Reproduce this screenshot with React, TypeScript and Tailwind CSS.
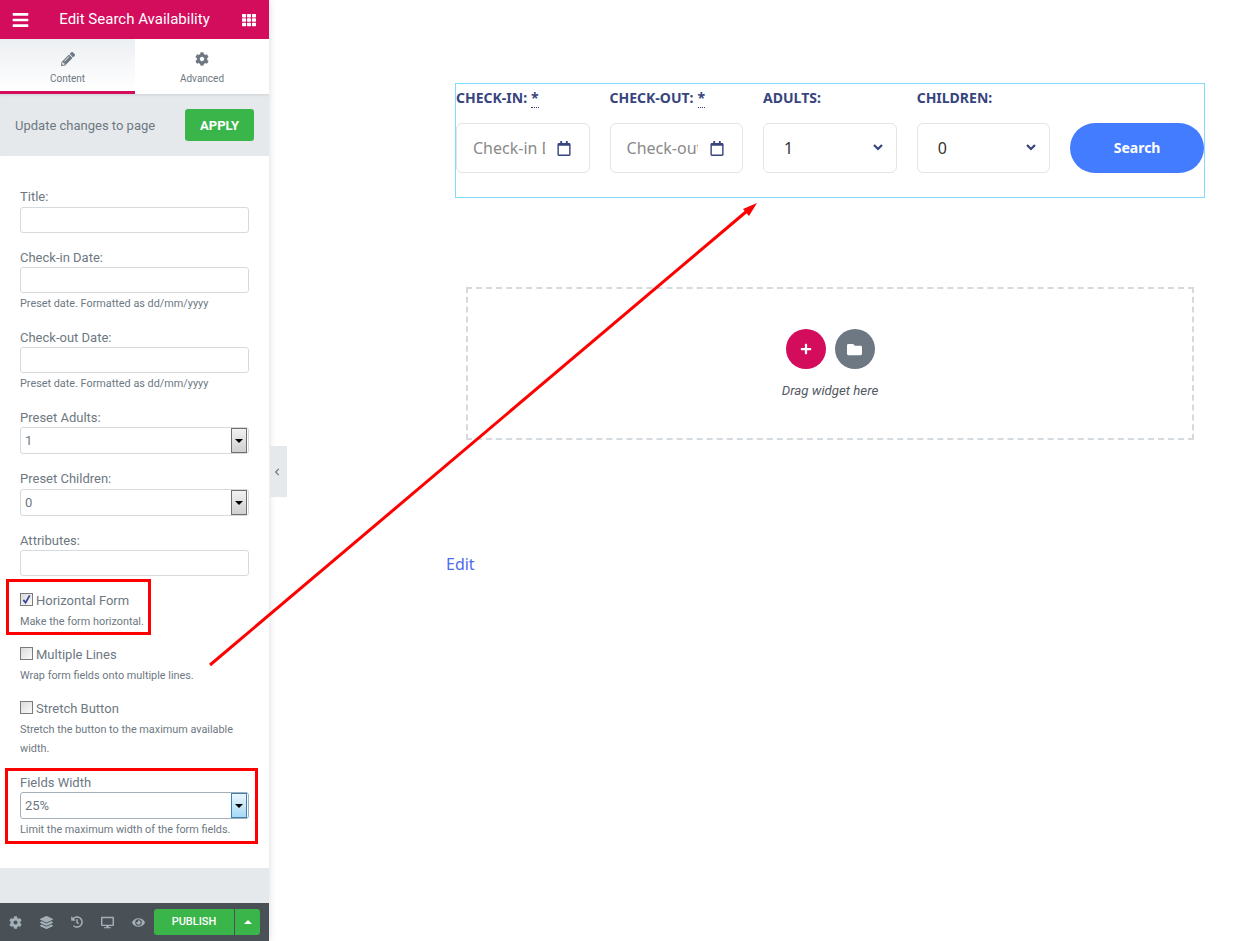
import type { ReactNode } from "react";
import {
  FaBars,
  FaChevronLeft,
  FaCog,
  FaDesktop,
  FaEye,
  FaFolder,
  FaHistory,
  FaLayerGroup,
  FaPencilAlt,
  FaPlus,
  FaRegCalendar,
  FaTh,
} from "react-icons/fa";

const Label = ({ children, className = "" }: { children: ReactNode; className?: string }) => (
  <div className={`h-[15px] text-[13px] leading-[15px] text-[#6d7882] ${className}`}>{children}</div>
);

const Help = ({ children, className = "" }: { children: ReactNode; className?: string }) => (
  <p className={`text-[10.85px] leading-[19px] text-[#6d7882] ${className}`}>{children}</p>
);

const TextBox = ({ className = "" }: { className?: string }) => (
  <input
    type="text"
    className={`block h-[26px] w-[229px] rounded-[3px] border border-[#d5dadf] bg-white outline-none ${className}`}
  />
);

const SelectBox = ({ value, active = false, className = "" }: { value: string; active?: boolean; className?: string }) => (
  <div
    className={`flex h-[27px] w-[229px] items-center justify-between rounded-[3px] border pl-[4px] pr-[1px] text-[13px] text-[#6d7882] ${
      active ? "border-[#a4afb7]" : "border-[#d5dadf]"
    } ${className}`}
  >
    <span>{value}</span>
    <span
      className={`flex h-[25px] w-[16px] items-center justify-center border ${
        active
          ? "border-[#3c7fb1] bg-gradient-to-b from-[#eaf6fd] to-[#a7d9f5]"
          : "border-[#707070] bg-gradient-to-b from-[#f2f2f2] to-[#cfcfcf]"
      }`}
    >
      <span className="h-0 w-0 border-x-[4px] border-t-[4px] border-x-transparent border-t-black" />
    </span>
  </div>
);

const CheckRow = ({ label, checked = false }: { label: string; checked?: boolean }) => (
  <div className="flex h-[15px] items-center gap-[3px]">
    <span className="mb-[2px] flex h-[13px] w-[13px] items-center justify-center border border-[#7b7b7b] bg-gradient-to-br from-[#dcdcdc] to-[#fafafa]">
      {checked && (
        <svg viewBox="0 0 12 12" className="h-[11px] w-[11px]">
          <path d="M2.5 6.5 L5 9.5 L9.5 1.5" fill="none" stroke="#3b4a9c" strokeWidth="2" />
        </svg>
      )}
    </span>
    <span className="text-[13px] leading-[15px] text-[#6d7882]">{label}</span>
  </div>
);

const FormField = ({ label, required = false, children }: { label: string; required?: boolean; children: ReactNode }) => (
  <div className="w-[134px]">
    <div className="h-[24px] text-[14px] font-bold leading-[28px] text-[#37447e]">
      {label}
      {required && <span className="ml-[4px] border-b border-dotted border-[#37447e]">*</span>}
    </div>
    <div className="mt-[15px] flex h-[50px] items-center rounded-[6px] border border-[#e4e4e4] bg-white text-[16px]">
      {children}
    </div>
  </div>
);

const DateField = ({ label, placeholder, textWidth }: { label: string; placeholder: string; textWidth: string }) => (
  <FormField label={label} required>
    <span className={`ml-[16px] overflow-hidden whitespace-nowrap text-[#8a8a8a] ${textWidth}`}>{placeholder}</span>
    <FaRegCalendar className="ml-auto mr-[18px] h-[15px] w-[14px] text-[#37447e]" />
  </FormField>
);

const NumberField = ({ label, value }: { label: string; value: string }) => (
  <FormField label={label}>
    <span className="ml-[20px] text-[#333]">{value}</span>
    <svg viewBox="0 0 10 7" className="mb-[2px] ml-auto mr-[13px] h-[7px] w-[10px]">
      <path d="M1 1 L5 5 L9 1" fill="none" stroke="#37447e" strokeWidth="2.2" />
    </svg>
  </FormField>
);

export default function App() {
  return (
    <div
      className="relative flex h-[941px] w-[1258px] overflow-hidden bg-white"
      style={{ fontFamily: "Roboto, sans-serif" }}
    >
      {/* editor panel */}
      <aside className="flex h-full w-[269px] shrink-0 flex-col bg-white shadow-[1px_0_6px_rgba(0,0,0,0.12)]">
        <header className="flex h-[39px] items-center justify-between bg-[#d30c5c] pl-[12px] pr-[13px] text-white">
          <FaBars className="h-[18px] w-[17px]" />
          <span className="mr-[2px] text-[15px]">Edit Search Availability</span>
          <FaTh className="h-[14px] w-[14px]" />
        </header>

        <div className="flex h-[55px] text-[10px] text-[#6d7882]">
          <div className="flex w-[135px] flex-col items-center border-b-[3px] border-[#d30c5c] bg-gradient-to-b from-[#eceff2] to-white pt-[13px]">
            <FaPencilAlt className="h-[14px] w-[14px]" />
            <span className="mt-[5px] leading-[16px]">Content</span>
          </div>
          <div className="flex flex-1 flex-col items-center pt-[13px]">
            <FaCog className="h-[14px] w-[14px]" />
            <span className="mt-[5px] leading-[16px]">Advanced</span>
          </div>
        </div>

        <div className="flex h-[62px] items-center justify-between bg-[#e6e9ec] pl-[15px] pr-[15px] shadow-[inset_0_3px_3px_-2px_rgba(0,0,0,0.1)]">
          <span className="mt-[2px] text-[13px] text-[#6d7882]">Update changes to page</span>
          <button className="h-[32px] w-[69px] rounded-[3px] bg-[#39b54a] pt-[2px] text-[13px] font-bold text-white">
            APPLY
          </button>
        </div>

        <div className="flex-1 pl-[20px] pt-[33px]">
          <Label>Title:</Label>
          <TextBox className="mt-[3px]" />

          <Label className="mt-[17px]">Check-in Date:</Label>
          <TextBox className="mt-[2px]" />
          <Help className="mt-[1px]">Preset date. Formatted as dd/mm/yyyy</Help>

          <Label className="mt-[17px]">Check-out Date:</Label>
          <TextBox className="mt-[2px]" />
          <Help className="mt-[1px]">Preset date. Formatted as dd/mm/yyyy</Help>

          <Label className="mt-[17px]">Preset Adults:</Label>
          <SelectBox value="1" className="mt-[2px]" />

          <Label className="mt-[17px]">Preset Children:</Label>
          <SelectBox value="0" className="mt-[3px]" />

          <Label className="mt-[17px]">Attributes:</Label>
          <TextBox className="mt-[2px]" />

          <div className="mt-[17px]">
            <CheckRow label="Horizontal Form" checked />
          </div>
          <Help className="mt-[4px]">Make the form horizontal.</Help>

          <div className="mt-[16px]">
            <CheckRow label="Multiple Lines" />
          </div>
          <Help className="mt-[4px]">Wrap form fields onto multiple lines.</Help>

          <div className="mt-[16px]">
            <CheckRow label="Stretch Button" />
          </div>
          <Help className="mt-[4px] w-[229px]">Stretch the button to the maximum available width.</Help>

          <Label className="mt-[17px]">Fields Width</Label>
          <SelectBox value="25%" active className="mt-[2px]" />
          <Help className="mt-[1px]">Limit the maximum width of the form fields.</Help>
        </div>

        <div className="h-[35px] bg-[#e6e9ec]" />

        <footer className="flex h-[38px] items-center bg-[#495157] pl-[9px] pr-[9px] text-[#a4afb7]">
          <FaCog className="h-[13px] w-[13px]" />
          <FaLayerGroup className="ml-[18px] h-[13px] w-[13px]" />
          <FaHistory className="ml-[18px] h-[12px] w-[12px]" />
          <FaDesktop className="ml-[18px] h-[13px] w-[13px]" />
          <FaEye className="ml-[18px] h-[13px] w-[13px]" />
          <div className="ml-[9px] flex h-[26px] flex-1 overflow-hidden rounded-[3px] bg-[#39b54a] text-white">
            <span className="flex w-[80px] items-center justify-center text-[11px] font-medium">PUBLISH</span>
            <span className="flex flex-1 items-center justify-center border-l border-[#495157]">
              <span className="h-0 w-0 border-x-[4px] border-b-[4px] border-x-transparent border-b-white" />
            </span>
          </div>
        </footer>
      </aside>

      {/* collapse handle */}
      <div className="ml-[1px] mt-[446px] flex h-[51px] w-[17px] shrink-0 items-center justify-center self-start bg-[#e6e9ec] pr-[3px]">
        <FaChevronLeft className="h-[8px] w-[8px] text-[#6d7882]" />
      </div>

      {/* page preview */}
      <main className="flex-1 pl-[168px] pt-[83px]" style={{ fontFamily: '"Noto Sans", sans-serif' }}>
        <div className="flex h-[115px] w-[750px] gap-[19.75px] border border-[#7fdcff]">
          <DateField label="CHECK-IN:" placeholder="Check-in Date" textWidth="w-[72px]" />
          <DateField label="CHECK-OUT:" placeholder="Check-out Date" textWidth="w-[71px]" />
          <NumberField label="ADULTS:" value="1" />
          <NumberField label="CHILDREN:" value="0" />
          <button className="mt-[39px] h-[50px] w-[134px] rounded-[25px] bg-[#447cff] pb-[2px] text-[14px] font-bold text-white">
            Search
          </button>
        </div>

        <div className="ml-[11px] mt-[89px] flex h-[153px] w-[728px] flex-col items-center border-2 border-dashed border-[#d5dadf] pt-[40px]">
          <div className="flex gap-[9px]">
            <span className="flex h-[40px] w-[40px] items-center justify-center rounded-full bg-[#d30c5c] text-white">
              <FaPlus className="h-[12px] w-[12px]" />
            </span>
            <span className="flex h-[40px] w-[40px] items-center justify-center rounded-full bg-[#6d7882] text-white">
              <FaFolder className="h-[15px] w-[15px]" />
            </span>
          </div>
          <span className="mt-[12px] text-[13.25px] italic text-[#54595f]" style={{ fontFamily: "Roboto, sans-serif" }}>
            Drag widget here
          </span>
        </div>

        <a className="ml-[-9px] mt-[113px] block text-[16px] leading-[22px] text-[#4f6bed]">Edit</a>
      </main>

      {/* annotations laid over the screenshot */}
      <div className="absolute left-[6px] top-[579px] h-[56px] w-[145px] border-[3px] border-[#f00]" />
      <div className="absolute left-[5px] top-[768px] h-[76px] w-[253px] border-[3px] border-[#f00]" />
      <svg className="absolute left-0 top-0 h-[941px] w-[1258px]" viewBox="0 0 1258 941">
        <line x1="210" y1="665" x2="747" y2="211" stroke="#f00" strokeWidth="3" />
        <polygon points="757,203 743,209 749,216" fill="#f00" />
      </svg>
    </div>
  );
}
